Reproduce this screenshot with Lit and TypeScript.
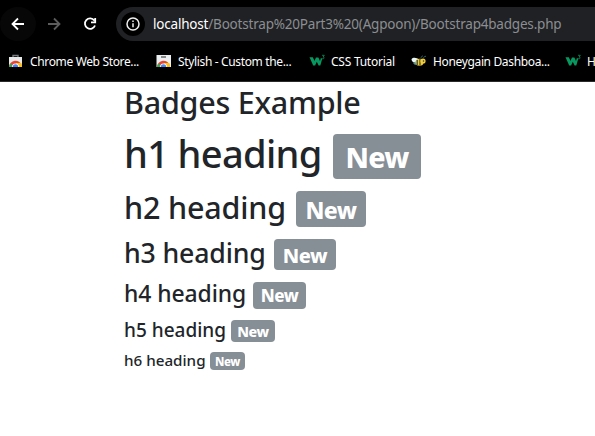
import { LitElement, html, css, svg } from "lit";
import { customElement } from "lit/decorators.js";

const swirl = svg`<path d="M1.200 14a6.300 6.300 0 0 1 12.400-1.500L13.800 14z" fill="#e94335"/><path d="M1.200 14c0-1.800.6-3 1.300-3.800L6 14z" fill="#36a853"/><path d="M8 10h5.300c.5 1 .7 2.500.7 4H8z" fill="#fbc116"/><path d="M4 14a3.500 3.500 0 0 1 7 0z" fill="#fff"/><path d="M4.800 14a2.700 2.700 0 0 1 5.400 0z" fill="#4285f4"/>`;
const store = svg`<path d="M5 4.500V2.500h5v2" fill="none" stroke="#777b7f" stroke-width="1.400"/><path d="M1 4h13v10H1z" fill="#e6e8ea"/>${swirl}`;
const stylish = svg`<path d="M.5 2h14.500v12H.5z" fill="#eceff1"/><path d="M5 4h5" stroke="#444" stroke-width="1.200"/>${swirl}`;
const w3 = svg`<path d="M.5 4.200h3.300L5.600 8l1.300-3.500h2.500L11 8l.8-2.800h1.600L11.300 12.500H9.600L7.800 8.700 6.100 12.500H4.200z" fill="#07985f"/><path d="M13 2.300h2.300L14.100 4c1.600.1 1.200 2.200-.8 1.800" fill="none" stroke="#07985f" stroke-width=".8"/>`;
const bee = svg`<path d="M.5 6.200C2 3.700 6 4.500 8 6.500L6 9.500C3 10.500.5 8.500.5 6.200z" fill="#e8f6f8"/><path d="M2 10l4-2 1 3-3 1z" fill="#4d8e92"/><ellipse cx="8.500" cy="9.300" rx="4" ry="3.500" fill="#f5c52c"/><path d="M6.200 7v5M9 6v6.500" stroke="#25464b" stroke-width="1.200"/><circle cx="12" cy="8" r="2.600" fill="#f7ce36"/><circle cx="12.500" cy="8" r=".8" fill="#26434a"/><path d="M10 5.500c0-2 1-2.500 2-2.500M12.500 5.300c.3-1.500 1-2 2.500-2" fill="none" stroke="#2f6268"/>`;

const bookmarks = [
  { icon: store, label: "Chrome Web Store...", name: "store" },
  { icon: stylish, label: "Stylish - Custom the...", name: "stylish" },
  { icon: w3, label: "CSS Tutorial", name: "css" },
  { icon: bee, label: "Honeygain Dashboa...", name: "honey" },
  { icon: w3, label: "HTML", name: "html" },
];

@customElement("app-root")
export class AppRoot extends LitElement {
  static styles = css`
    :host { display: block; width: 595px; height: 436px; overflow: hidden; background: #fff; font-family: "Noto Sans", "Open Sans", sans-serif; }
    svg { display: block; flex: none; }
    .chrome { height: 82px; box-sizing: border-box; background: #000; border-bottom: 1px solid #2a2a2a; overflow: hidden; }
    .toolbar { display: flex; align-items: center; height: 34px; padding-top: 7px; }
    .nav { width: 36px; height: 34px; display: grid; place-items: center; flex: none; }
    .nav.back { border-radius: 50%; background: #070707; }
    .nav svg { fill: none; stroke: #fff; stroke-width: 1.800; }
    .nav.forward svg { stroke: #5d5d5d; }
    .address { display: flex; align-items: center; flex: 1; height: 34px; margin-left: 8px; padding-left: 5px; border-radius: 17px 0 0 17px; background: #202124; box-sizing: border-box; }
    .info { width: 24px; height: 24px; border-radius: 50%; background: #000; display: grid; place-items: center; flex: none; }
    .url { margin-left: 8px; font-size: 13.500px; line-height: 34px; white-space: nowrap; color: #8b8e92; letter-spacing: -0.200px; }
    .host { color: #fff; }
    .bookmarks { display: flex; height: 40px; align-items: center; padding-left: 8px; }
    .bookmark { display: flex; align-items: center; flex: none; gap: 6px; color: #fff; font-size: 12px; white-space: nowrap; letter-spacing: -0.350px; }
    .store { width: 148px; }
    .stylish { width: 153px; }
    .css, .html { width: 102px; letter-spacing: -0.250px; }
    .honey { width: 154px; }
    main { padding-left: 124px; color: #212529; white-space: nowrap; }
    .title { margin: 0; height: 52px; font-size: 30.500px; font-weight: 500; line-height: 41px; letter-spacing: -0.008em; }
    .row { display: flex; align-items: baseline; margin: 0; font-weight: 500; }
    .label { line-height: .85; flex: none; letter-spacing: -0.006em; }
    .badge { border-radius: 4px; background: #868e96; color: #fff; font-weight: 800; text-align: center; box-sizing: border-box; flex: none; letter-spacing: -0.025em; }
    .h1 { height: 45px; margin-bottom: 12px; font-size: 38.100px; }
    .h1 .label { width: 209px; letter-spacing: -0.018em; }
    .h1 .badge { width: 88px; height: 45px; font-size: 28.500px; line-height: 46px; }
    .h2 { height: 36px; margin-bottom: 12px; font-size: 30.500px; }
    .h2 .label { width: 172px; }
    .h2 .badge { width: 70px; height: 36px; font-size: 23px; line-height: 38px; }
    .h3 { height: 31px; margin-bottom: 12px; font-size: 26.700px; }
    .h3 .label { width: 150px; }
    .h3 .badge { width: 62px; height: 31px; font-size: 20px; line-height: 33px; }
    .h4 { height: 27px; margin-bottom: 11px; font-size: 22.900px; }
    .h4 .label { width: 129px; letter-spacing: -0.003em; }
    .h4 .badge { width: 53px; height: 27px; font-size: 17px; line-height: 27px; }
    .h5 { height: 22px; margin-bottom: 10px; font-size: 19px; }
    .h5 .label { width: 107px; letter-spacing: 0; }
    .h5 .badge { width: 44px; height: 22px; font-size: 14.300px; line-height: 23px; }
    .h6 { height: 18px; font-size: 15.200px; }
    .h6 .label { width: 86px; letter-spacing: 0; }
    .h6 .badge { width: 35px; height: 18px; font-size: 11.400px; line-height: 19px; }
  `;

  render() {
    return html`
      <header class="chrome">
        <div class="toolbar">
          <span class="nav back"><svg width="14" height="14" viewBox="0 0 14 14"><path d="M13 7H2M7 1.500L1.500 7 7 12.500"/></svg></span>
          <span class="nav forward"><svg width="14" height="14" viewBox="0 0 14 14"><path d="M1 7h11M7 1.500L12.500 7 7 12.500"/></svg></span>
          <span class="nav"><svg width="14" height="14" viewBox="0 0 14 14"><path d="M11.300 3.500A5.200 5.200 0 1 0 12 8.500M12.200 1v4.300H8"/></svg></span>
          <div class="address">
            <span class="info"><svg width="14" height="14" viewBox="0 0 14 14" fill="none" stroke="#eee" stroke-width="1.500"><circle cx="7" cy="7" r="6"/><path d="M7 6.200v4M7 3.500V5"/></svg></span>
            <span class="url"><span class="host">localhost</span>/Bootstrap%20Part3%20(Agpoon)/Bootstrap4badges.php</span>
          </div>
        </div>
        <nav class="bookmarks">
          ${bookmarks.map((b) => html`<span class="bookmark ${b.name}"><svg width="16" height="16" viewBox="0 0 16 16">${b.icon}</svg><span>${b.label}</span></span>`)}
        </nav>
      </header>
      <main>
        <h2 class="title">Badges Example</h2>
        ${[1, 2, 3, 4, 5, 6].map((n) => html`<div class="row h${n}" role="heading" aria-level=${n}><span class="label">h${n} heading</span><span class="badge">New</span></div>`)}
      </main>
    `;
  }
}
